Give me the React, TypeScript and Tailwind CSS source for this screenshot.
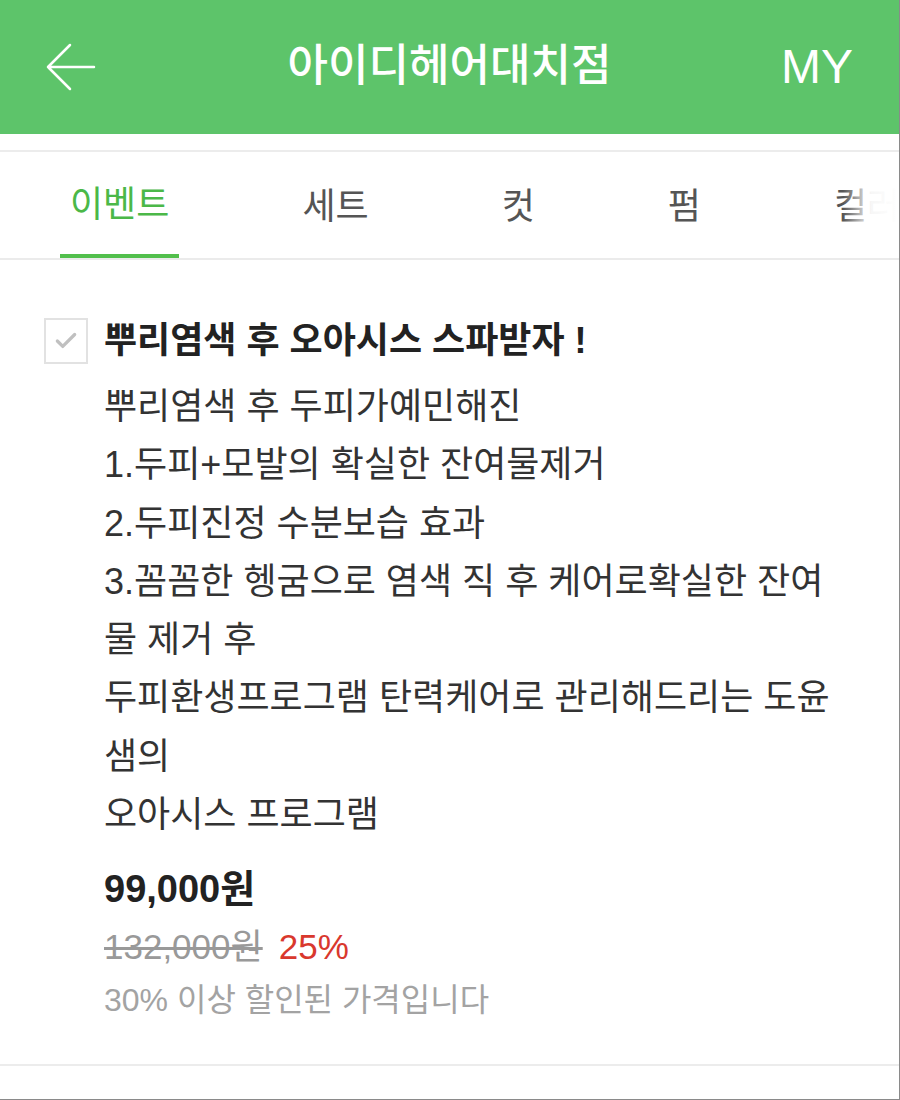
import { Check } from 'lucide-react';

const TABS = ['이벤트', '세트', '컷', '펌', '컬러'];

const BODY = `뿌리염색 후 두피가예민해진
1.두피+모발의 확실한 잔여물제거
2.두피진정 수분보습 효과
3.꼼꼼한 헹굼으로 염색 직 후 케어로확실한 잔여물 제거 후
두피환생프로그램 탄력케어로 관리해드리는 도윤샘의
오아시스 프로그램`;

export default function App() {
  return (
    <div className="w-[900px] h-[1100px] overflow-hidden bg-white border-r border-b border-[#8a8a8a] font-['Liberation_Sans','Noto_Sans_CJK_KR',sans-serif]">
      {/* Header */}
      <div className="h-[134px] bg-[#5dc46a] grid grid-cols-[1fr_auto_1fr] items-center px-[46px]">
        <svg width="50" height="48" viewBox="0 0 50 48" fill="none" stroke="white" strokeWidth={2.5} strokeLinecap="round">
          <path d="M2 24h46M2 24L24 2M2 24l22 22" />
        </svg>
        <h1 className="text-white text-[44px] font-medium pb-[2px]">아이디헤어대치점</h1>
        <span className="justify-self-end text-white text-[48px] leading-none">MY</span>
      </div>

      {/* Tabs */}
      <div className="mt-[16px] border-t-2 border-[#ececec]">
        <div className="relative h-[108px] border-b-2 border-[#ebebeb] flex pl-[60px] gap-[113px] overflow-hidden">
          {TABS.map((t, i) => (
            <div
              key={t}
              className={
                i === 0
                  ? 'h-full px-[10px] pt-[4px] flex items-center text-[36px] text-[#4bb848] border-b-4 border-[#52bf4c] shrink-0'
                  : 'h-full px-[10px] pt-[4px] flex items-center text-[36px] text-[#555] shrink-0'
              }
            >
              {t}
            </div>
          ))}
          <div className="absolute right-0 top-0 bottom-[4px] w-[56px] bg-gradient-to-r from-white/0 via-white/95 to-white" />
        </div>
      </div>

      {/* Event item */}
      <div className="pt-[54px] pb-[40px] border-b-2 border-[#ececec]">
        <div className="flex items-center pl-[44px]">
          <div className="w-[44px] h-[46px] border-2 border-[#e2e2e2] flex items-center justify-center">
            <Check className="w-[26px] h-[26px] text-[#c0c0c0]" strokeWidth={3} />
          </div>
          <h2 className="ml-[16px] text-[36px] font-bold text-[#222]">뿌리염색 후 오아시스 스파받자 !</h2>
        </div>
        <p className="mt-[10px] w-[848px] pl-[104px] text-[36px] leading-[58.3px] text-[#333] whitespace-pre-line">
          {BODY}
        </p>
        <div className="mt-[16px] pl-[104px]">
          <div className="text-[38px] leading-[58px] font-bold text-[#222]">99,000원</div>
          <div className="text-[35px] leading-[58px] flex gap-[16px]">
            <span className="text-[#999] line-through">132,000원</span>
            <span className="text-[#d9382d]">25%</span>
          </div>
          <div className="text-[32px] leading-[48px] text-[#a3a3a3]">30% 이상 할인된 가격입니다</div>
        </div>
      </div>
    </div>
  );
}
